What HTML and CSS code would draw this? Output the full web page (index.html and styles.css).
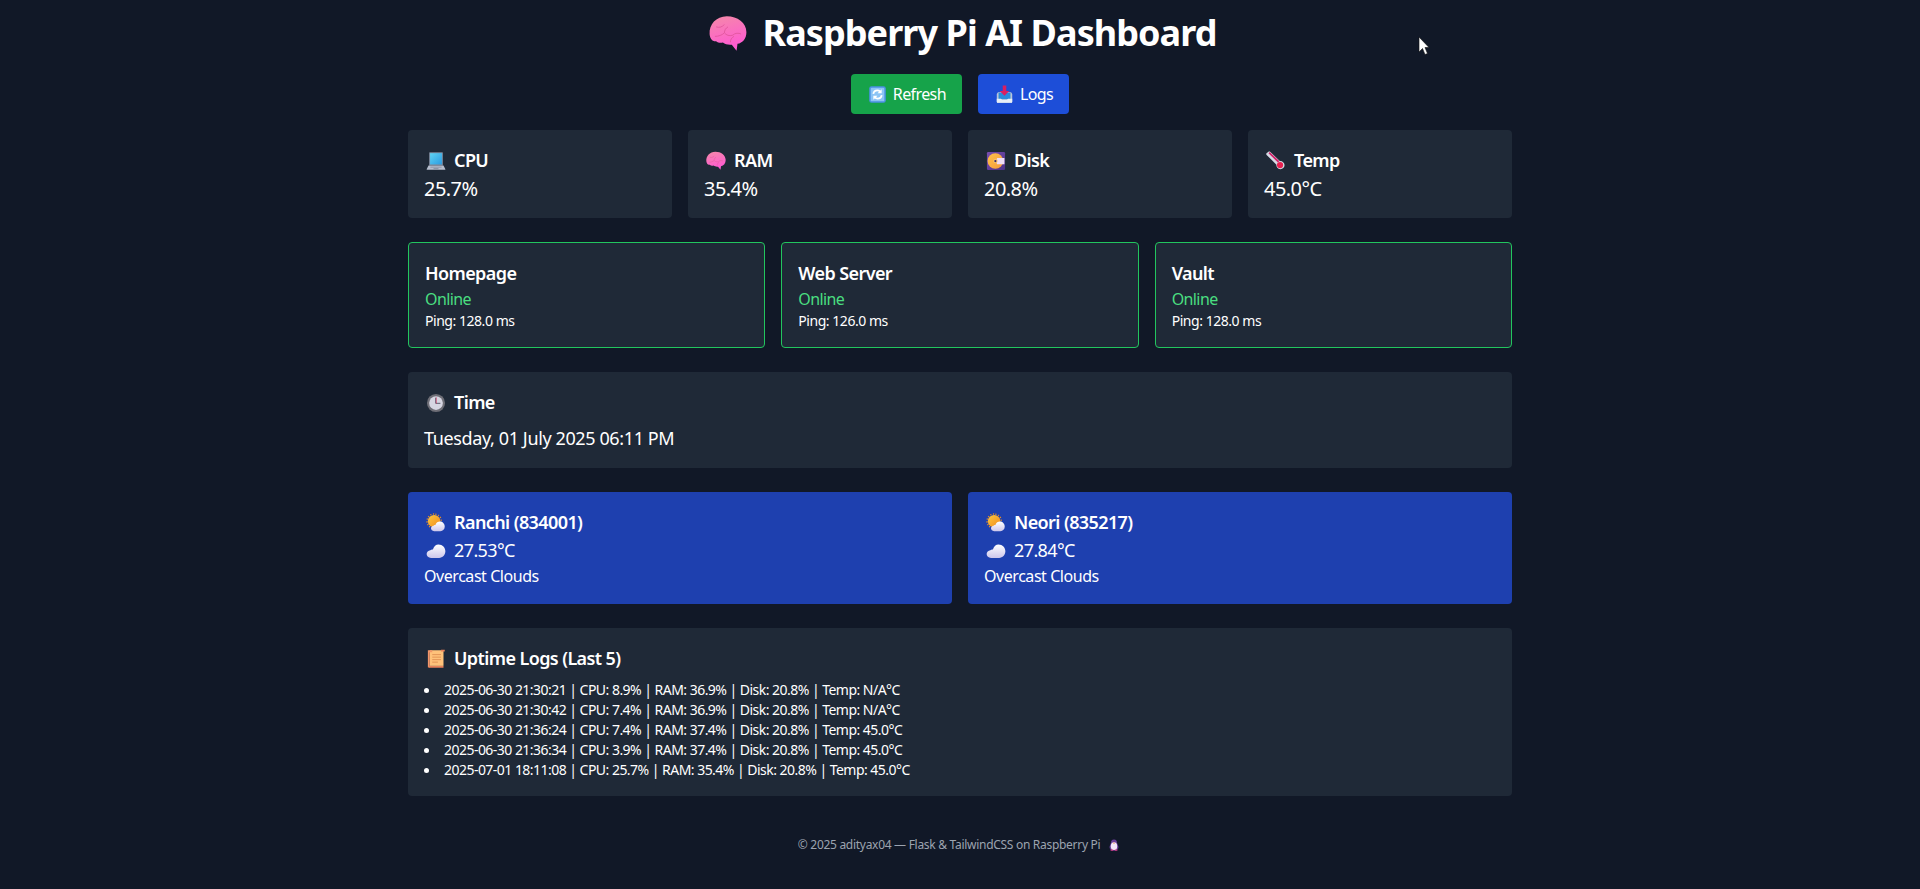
FILE: index.html
```html
<!DOCTYPE html>
<html lang="en">
<head>
<meta charset="UTF-8">
<meta name="viewport" content="width=device-width, initial-scale=1.0">
<title>Raspberry Pi AI Dashboard</title>
<link rel="stylesheet" href="styles.css">
</head>
<body>

<!-- emoji sprites -->
<svg class="sprites" aria-hidden="true">
  <defs>
    <linearGradient id="brainFill" x1="0" y1="0" x2="0.3" y2="1">
      <stop offset="0" stop-color="#f48aa8"/>
      <stop offset="1" stop-color="#ff5ad2"/>
    </linearGradient>
    <linearGradient id="screenFill" x1="0" y1="0" x2="1" y2="1">
      <stop offset="0" stop-color="#5fd4f4"/>
      <stop offset="1" stop-color="#2c9be0"/>
    </linearGradient>
    <linearGradient id="sunFill" x1="0" y1="0" x2="1" y2="1">
      <stop offset="0" stop-color="#ffc83d"/>
      <stop offset="1" stop-color="#f08a1d"/>
    </linearGradient>
    <linearGradient id="cloudFill" x1="0" y1="0" x2="0" y2="1">
      <stop offset="0" stop-color="#ffffff"/>
      <stop offset="1" stop-color="#cfc8ec"/>
    </linearGradient>
    <linearGradient id="discFill" x1="0" y1="0" x2="1" y2="1">
      <stop offset="0" stop-color="#ffc24a"/>
      <stop offset="1" stop-color="#f59a3c"/>
    </linearGradient>
    <linearGradient id="caseFill" x1="0" y1="0" x2="1" y2="1">
      <stop offset="0" stop-color="#7a4fb0"/>
      <stop offset="1" stop-color="#4a2f86"/>
    </linearGradient>
  </defs>
  <symbol id="brain" viewBox="0 0 32 32">
    <path fill="url(#brainFill)" d="M.5 16C0 8 6 1 15 1c9 0 16.500 5.500 16.500 13.500 0 5.500-3.200 9-7.500 9.800l-.8 5.700-4-5c-3 .4-5.500-.4-7.500-1.800-2 .6-4.200.2-5.700-1.100-1.500.2-3.200-.4-4-1.700C1.200 19.300.6 17.700.5 16z"/>
    <path fill="none" stroke="#e0559b" stroke-width=".7" d="M6 10c3 1 5 0 7-2M5 18c3 0 6-1 8-3 1.500 2 4 3 7 2M13 15c0-2 1-4 3-5M20 17c2-2 5-2 7-1M18 23c0-2 1-4 3-5"/>
  </symbol>
  <symbol id="refresh" viewBox="0 0 32 32">
    <rect x="2" y="2" width="28" height="28" rx="4" fill="#4a90e2"/>
    <rect x="4.500" y="4.500" width="23" height="23" rx="2" fill="#8cc4f5"/>
    <path fill="none" stroke="#fff" stroke-width="3" d="M9 15c.5-4 3-6 7-6 2 0 3.500 1 4.500 2M23 17c-.5 4-3 6-7 6-2 0-3.500-1-4.500-2"/>
    <path fill="#fff" d="M23 7v7h-7zM9 25v-7h7z"/>
  </symbol>
  <symbol id="inbox" viewBox="0 0 32 32">
    <path fill="#b9c6d8" d="M5 12h22l2 3v13a2 2 0 0 1-2 2H5a2 2 0 0 1-2-2V15z"/>
    <rect x="6" y="13" width="20" height="11" fill="#2a8bdc"/>
    <path fill="#e8eff7" d="M3 23h7l2 2h8l2-2h7v5a2 2 0 0 1-2 2H5a2 2 0 0 1-2-2z"/>
    <path fill="#d81f62" d="M13 1h6v9h5l-8 8-8-8h5z"/>
  </symbol>
  <symbol id="laptop" viewBox="0 0 32 32">
    <path fill="#7d899c" d="M6 2h20a1 1 0 0 1 1 1v20H5V3a1 1 0 0 1 1-1z"/>
    <rect x="6.500" y="3.500" width="19" height="18" fill="url(#screenFill)"/>
    <path fill="#b6bdcd" d="M4 23h24l3 6a1 1 0 0 1-1 1H2a1 1 0 0 1-1-1z"/>
    <path fill="#7f8899" d="M7 25h18v1.500H7zM12 27.500h8V29h-8z"/>
  </symbol>
  <symbol id="disk" viewBox="0 0 32 32">
    <rect x="1.500" y="1.500" width="29" height="29" rx="2" fill="url(#caseFill)"/>
    <circle cx="15" cy="16" r="12.500" fill="url(#discFill)"/>
    <path fill="#efdcf5" d="M15 16l3-5h11.500v10H18z"/>
    <circle cx="15" cy="16" r="3.500" fill="#f7c163"/>
    <circle cx="15" cy="16" r="1.800" fill="#3d2a6e"/>
  </symbol>
  <symbol id="thermo" viewBox="0 0 32 32">
    <path fill="#d8dbe6" d="M3.500 1.500c1-.8 2.500-.8 3.500.2l15.500 14.500a6.500 6.500 0 1 1-5.800 5.600L1 6.500C0 5.500.2 3.500 1.200 3z"/>
    <path fill="#d0246a" d="M4 3.500l15 15 2.500-2.300L6 1.500z"/>
    <circle cx="22.500" cy="22.500" r="5" fill="#e8204f"/>
  </symbol>
  <symbol id="clock" viewBox="0 0 32 32">
    <circle cx="16" cy="16" r="14.500" fill="#6e6e76"/>
    <circle cx="16" cy="16" r="11" fill="#d6d6e2"/>
    <path fill="none" stroke="#55556a" stroke-width="1.500" d="M15.500 7.500V16.500H23"/>
    <path fill="none" stroke="#d8335f" stroke-width="1" d="M16.500 7v10"/>
  </symbol>
  <symbol id="sun-cloud" viewBox="0 0 32 32">
    <circle cx="13" cy="13" r="10" fill="url(#sunFill)"/>
    <path fill="none" stroke="#ee8f1f" stroke-width="2" stroke-dasharray="2 2.500" d="M13 1.500a11.500 11.500 0 1 0 .1 0z"/>
    <path fill="url(#cloudFill)" d="M13 29c-3 0-5-2-5-4.500 0-2.300 1.700-4 4-4.300.9-1 2-1.500 3.300-1.500 1-3 3.700-5 7-5 4 0 7.700 3.300 7.700 8 0 4.500-3 7.300-7 7.300z"/>
  </symbol>
  <symbol id="cloud" viewBox="0 0 32 32">
    <path fill="url(#cloudFill)" d="M8 27c-4 0-7-2.800-7-6.200 0-3.300 2.600-5.900 6-6.200 1.200-1 2.500-1.300 4-1C12.500 8.500 16 5.500 20 5.500c6.500 0 11 5 11 11 0 6-4.500 10.500-10 10.500z"/>
  </symbol>
  <symbol id="scroll" viewBox="0 0 32 32">
    <path fill="#ffc27a" d="M6 2h22v25H6z"/>
    <path fill="#f3966a" d="M3 2h7v3H6v24H3z"/>
    <path fill="#e9825a" d="M4 27h24v3H4zM24 1h6v3h-6z"/>
    <path fill="none" stroke="#d9854a" stroke-width="1.200" d="M10 9h14M10 13h14M10 17h14M10 21h9"/>
  </symbol>
  <symbol id="penguin" viewBox="0 0 32 32">
    <path fill="#6b3f9a" d="M16 1c-6 0-8 4-8 8 0 3-4 8-4 13 0 5 5 9 12 9s12-4 12-9c0-5-4-10-4-13 0-4-2-8-8-8z"/>
    <ellipse cx="16" cy="19" rx="8.500" ry="10.500" fill="#f3e6f8"/>
    <path fill="#f48a3c" d="M13 10h6l-3 3z"/>
    <path fill="#d9408f" d="M7 28h7v3H7zM18 28h7v3h-7z"/>
  </symbol>
</svg>

<div class="container">

  <h1 class="title"><svg class="emoji emoji-title"><use href="#brain"/></svg>Raspberry Pi AI Dashboard</h1>

  <div class="actions">
    <a class="btn btn-green" href="#"><svg class="emoji emoji-btn"><use href="#refresh"/></svg>Refresh</a>
    <a class="btn btn-blue" href="#"><svg class="emoji emoji-btn"><use href="#inbox"/></svg>Logs</a>
  </div>

  <div class="stats">
    <div class="card">
      <h2 class="card-title"><svg class="emoji"><use href="#laptop"/></svg>CPU</h2>
      <p class="value">25.7%</p>
    </div>
    <div class="card">
      <h2 class="card-title"><svg class="emoji"><use href="#brain"/></svg>RAM</h2>
      <p class="value">35.4%</p>
    </div>
    <div class="card">
      <h2 class="card-title"><svg class="emoji"><use href="#disk"/></svg>Disk</h2>
      <p class="value">20.8%</p>
    </div>
    <div class="card">
      <h2 class="card-title"><svg class="emoji"><use href="#thermo"/></svg>Temp</h2>
      <p class="value">45.0°C</p>
    </div>
  </div>

  <div class="services">
    <div class="card service">
      <h2 class="card-title">Homepage</h2>
      <p class="status">Online</p>
      <p class="ping">Ping: 128.0 ms</p>
    </div>
    <div class="card service">
      <h2 class="card-title">Web Server</h2>
      <p class="status">Online</p>
      <p class="ping">Ping: 126.0 ms</p>
    </div>
    <div class="card service">
      <h2 class="card-title">Vault</h2>
      <p class="status">Online</p>
      <p class="ping">Ping: 128.0 ms</p>
    </div>
  </div>

  <div class="card section">
    <h2 class="card-title spaced"><svg class="emoji"><use href="#clock"/></svg>Time</h2>
    <p class="value-sm">Tuesday, 01 July 2025 06:11 PM</p>
  </div>

  <div class="weather">
    <div class="card weather-card">
      <h2 class="card-title"><svg class="emoji"><use href="#sun-cloud"/></svg>Ranchi (834001)</h2>
      <p class="value-sm temp"><svg class="emoji"><use href="#cloud"/></svg>27.53°C</p>
      <p class="desc">Overcast Clouds</p>
    </div>
    <div class="card weather-card">
      <h2 class="card-title"><svg class="emoji"><use href="#sun-cloud"/></svg>Neori (835217)</h2>
      <p class="value-sm temp"><svg class="emoji"><use href="#cloud"/></svg>27.84°C</p>
      <p class="desc">Overcast Clouds</p>
    </div>
  </div>

  <div class="card section">
    <h2 class="card-title spaced"><svg class="emoji"><use href="#scroll"/></svg>Uptime Logs (Last 5)</h2>
    <ul class="logs">
      <li>2025-06-30 21:30:21 | CPU: 8.9% | RAM: 36.9% | Disk: 20.8% | Temp: N/A°C</li>
      <li>2025-06-30 21:30:42 | CPU: 7.4% | RAM: 36.9% | Disk: 20.8% | Temp: N/A°C</li>
      <li>2025-06-30 21:36:24 | CPU: 7.4% | RAM: 37.4% | Disk: 20.8% | Temp: 45.0°C</li>
      <li>2025-06-30 21:36:34 | CPU: 3.9% | RAM: 37.4% | Disk: 20.8% | Temp: 45.0°C</li>
      <li>2025-07-01 18:11:08 | CPU: 25.7% | RAM: 35.4% | Disk: 20.8% | Temp: 45.0°C</li>
    </ul>
  </div>

  <footer class="footer">© 2025 adityax04 — Flask &amp; TailwindCSS on Raspberry Pi <svg class="emoji emoji-foot"><use href="#penguin"/></svg></footer>

</div>

<!-- mouse pointer caught in the capture -->
<svg class="pointer" viewBox="0 0 12 20"><path fill="#fff" stroke="#111" stroke-width=".6" d="M1 1v15l3.500-3.500 2.500 6 2.500-1-2.500-6H11z"/></svg>

</body>
</html>
```

FILE: styles.css
```css
* {
  box-sizing: border-box;
}
body {
  margin: 0;
  background-color: #111827;
  color: #fff;
  font-family: "Noto Sans", "Open Sans", sans-serif;
  position: relative;
}
h1, h2, p, ul {
  margin: 0;
}
.sprites {
  position: absolute;
  width: 0;
  height: 0;
}
.container {
  max-width: 1152px;
  margin: 0 auto;
  padding: 13px 24px 0;
}
.title {
  font-size: 36px;
  line-height: 40px;
  font-weight: 700;
  text-align: center;
  letter-spacing: -0.94px;
  padding-left: 5px;
}
.actions {
  display: flex;
  justify-content: center;
  gap: 16px;
  margin-top: 21px;
  margin-bottom: 16px;
}
.btn {
  display: flex;
  align-items: center;
  height: 40px;
  padding: 0 16px;
  border-radius: 4px;
  color: #fff;
  font-size: 16px;
  letter-spacing: -0.6px;
  text-decoration: none;
}
.btn-green {
  background-color: #16a34a;
}
.btn-blue {
  background-color: #1d4ed8;
}
.card {
  background-color: #1f2937;
  border-radius: 4px;
  padding: 16px;
}
.card-title {
  font-size: 18px;
  line-height: 28px;
  font-weight: 600;
  letter-spacing: -0.6px;
}
.card-title.spaced {
  margin-bottom: 8px;
}
.emoji {
  width: 20px;
  height: 20px;
  margin: 0 8px 0 2px;
  vertical-align: -4px;
}
.emoji-title {
  width: 38px;
  height: 38px;
  margin: 0 16px 0 0;
  vertical-align: -7px;
}
.emoji-btn {
  width: 19px;
  height: 19px;
  margin: 0 6px 0 1px;
}
.emoji-foot {
  width: 12px;
  height: 12px;
  margin: 0 2px 0 5px;
  vertical-align: -2px;
}
.stats {
  display: grid;
  grid-template-columns: repeat(4, 1fr);
  gap: 16px;
  margin-bottom: 24px;
}
.value {
  font-size: 20px;
  line-height: 26px;
  letter-spacing: -0.55px;
  padding-top: 2px;
}
.services {
  display: grid;
  grid-template-columns: repeat(3, 1fr);
  gap: 16px;
  margin-bottom: 24px;
}
.service {
  border: 1px solid #22c55e;
}
.status {
  font-size: 16px;
  line-height: 24px;
  color: #4ade80;
  letter-spacing: -0.6px;
}
.ping {
  font-size: 14px;
  line-height: 20px;
  letter-spacing: -0.46px;
}
.section {
  margin-bottom: 24px;
}
.value-sm {
  font-size: 18px;
  line-height: 28px;
  letter-spacing: -0.38px;
}
.temp {
  letter-spacing: -0.6px;
}
.weather {
  display: grid;
  grid-template-columns: repeat(2, 1fr);
  gap: 16px;
  margin-bottom: 24px;
}
.weather-card {
  background-color: #1e40af;
}
.desc {
  font-size: 16px;
  line-height: 24px;
  letter-spacing: -0.45px;
}
.logs {
  padding: 0;
  list-style: none;
  font-size: 14px;
  line-height: 20px;
  letter-spacing: -0.53px;
}
.logs li {
  display: flex;
  align-items: center;
}
.logs li::before {
  content: "";
  flex: none;
  width: 5px;
  height: 5px;
  margin-right: 15px;
  border-radius: 50%;
  background-color: #fff;
}
.footer {
  margin-top: 41px;
  text-align: center;
  font-size: 12px;
  line-height: 16px;
  letter-spacing: -0.29px;
  color: #9ca3af;
}
.pointer {
  position: absolute;
  left: 1418px;
  top: 36px;
  width: 12px;
  height: 20px;
}
```
